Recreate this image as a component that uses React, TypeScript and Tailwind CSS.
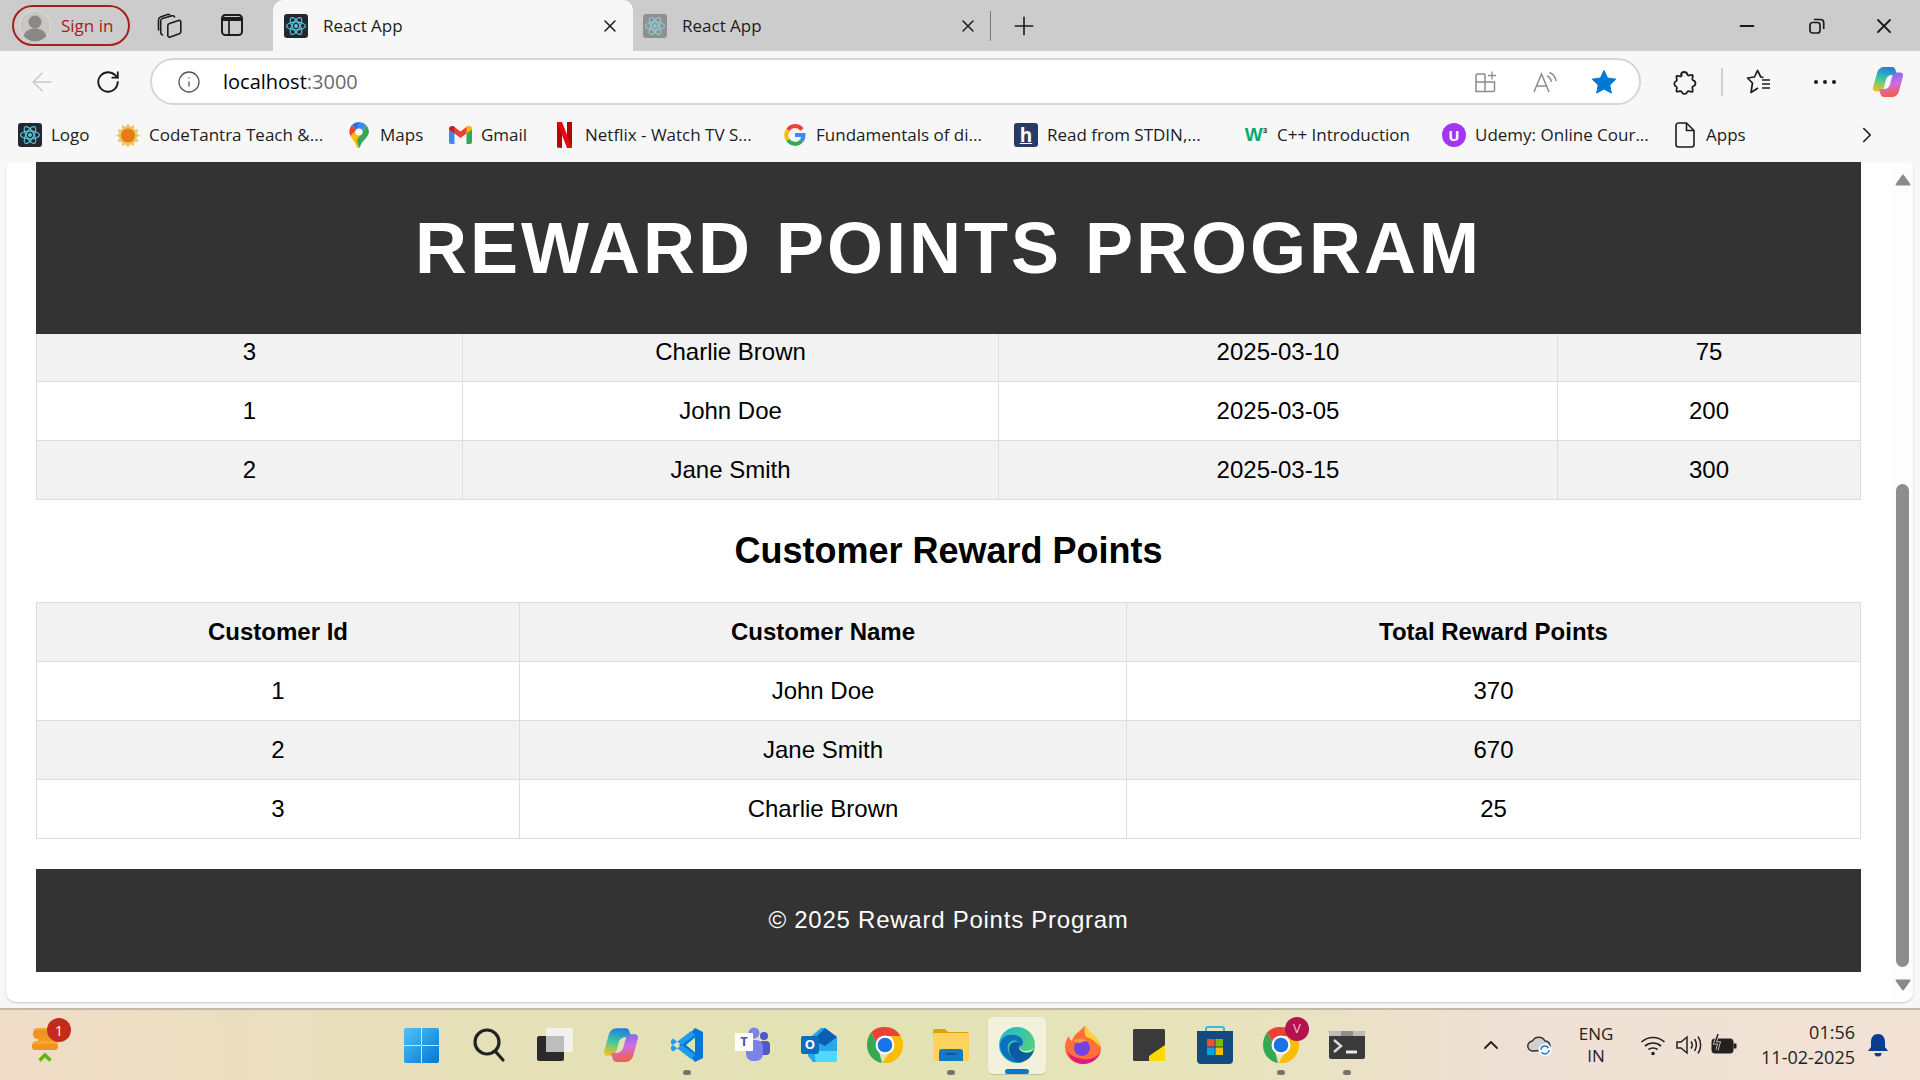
import React from 'react'
import { ArrowLeft, ChevronRight, ChevronUp, Info, Minus, Plus, RotateCw, X } from 'lucide-react'

const ReactLogo = ({ dim = false }: { dim?: boolean }) => (
  <svg width="24" height="24" viewBox="0 0 24 24" className={dim ? 'opacity-50' : ''}>
    <rect width="24" height="24" rx="3" fill={dim ? '#555' : '#23272f'} />
    <g fill="none" stroke="#58c4dc" strokeWidth="1.2">
      <ellipse cx="12" cy="12" rx="9.5" ry="3.8" />
      <ellipse cx="12" cy="12" rx="9.5" ry="3.8" transform="rotate(60 12 12)" />
      <ellipse cx="12" cy="12" rx="9.5" ry="3.8" transform="rotate(120 12 12)" />
    </g>
    <circle cx="12" cy="12" r="2" fill="#58c4dc" />
  </svg>
)

const Avatar = () => (
  <svg width="32" height="32" viewBox="0 0 32 32">
    <circle cx="16" cy="16" r="15.5" fill="#c9c7c3" stroke="#dedbd6" />
    <circle cx="16" cy="12" r="6.5" fill="#8a8885" />
    <path d="M4.5 26c2-5.500 6-7.500 11.500-7.500s9.500 2 11.500 7.500c-3 3.500-7 5.500-11.500 5.500s-8.500-2-11.500-5.500z" fill="#8a8885" />
  </svg>
)

const Collections = () => (
  <svg width="26" height="26" viewBox="0 0 26 26" fill="none" stroke="#1c1c1c" strokeWidth="1.600" strokeLinejoin="round" strokeLinecap="round">
    <path d="M13.500 10.500 22.500 7.500c1.500-.4 2.300.3 2.300 1.700v9.500c0 1.100-.5 1.700-1.500 2l-9 3.300c-1.500.5-2.500-.2-2.500-1.700V12.500c0-1 .5-1.700 1.700-2z" />
    <path d="M6.500 22c-1.200-.5-1.800-1.300-1.800-2.500V8c0-1.200.6-2 1.800-2.400L16 2.800c1.200-.3 2 0 2.600 1" />
    <path d="M2.500 17V7c0-1.500.7-2.500 2-3l7-2.500c1-.3 1.700-.1 2.200.6" />
  </svg>
)

const TabActions = () => (
  <svg width="24" height="24" viewBox="0 0 24 24" fill="none" stroke="#1c1c1c" strokeWidth="2">
    <rect x="2" y="2" width="20" height="20" rx="3.500" />
    <path d="M2 6h20" strokeWidth="4" />
    <path d="M9 7v15" strokeWidth="1.700" />
  </svg>
)

const Restore = () => (
  <svg width="18" height="18" viewBox="0 0 18 18" fill="none" stroke="#1c1c1c" strokeWidth="1.700">
    <rect x="2" y="5.500" width="10" height="10.500" rx="2.500" />
    <path d="M6 2.500h6.500c2 0 3.200 1.200 3.200 3.200V12" />
  </svg>
)

const SplitAdd = () => (
  <svg width="24" height="24" viewBox="0 0 24 24" fill="none" stroke="#8c8c8c" strokeWidth="1.500">
    <path d="M12 4H5a2 2 0 0 0-2 2v15.500h17a1.500 1.500 0 0 0 1.500-1.500v-8H3" />
    <path d="M12 4v17.500" />
    <path d="M19 1.500v8M15 5.500h8" strokeWidth="1.300" />
  </svg>
)

const ReadAloud = () => (
  <svg width="26" height="24" viewBox="0 0 26 24" fill="none" stroke="#8c8c8c" strokeWidth="1.500">
    <path d="M2 22 9.500 4 17 22M4.500 16h10" />
    <path d="M15 6c2.500 1 4 3 4.500 6M17.500 2.500c3.500 1.500 6 4.500 6.500 8.500" />
  </svg>
)

const Star = () => (
  <svg width="26" height="26" viewBox="0 0 26 26">
    <path d="M13 1.500l3.600 7.600 8.200 1.100-6 5.700 1.500 8.200-7.300-4-7.300 4 1.500-8.200-6-5.700 8.200-1.100z" fill="#0078d4" stroke="#0078d4" strokeLinejoin="round" />
  </svg>
)

const Extension = () => (
  <svg width="26" height="26" viewBox="0 0 26 26" fill="none" stroke="#1c1c1c" strokeWidth="1.800" strokeLinejoin="round">
    <path d="M10 5.500a3.300 3.300 0 0 1 6.400 0c.2.800 1 1.100 1.800.9l2.300-.5c.8-.2 1.500.5 1.300 1.300l-.5 2.300c-.2.800.1 1.500.9 1.800a3.200 3.200 0 0 1 0 6.100c-.8.300-1.100 1-.9 1.800l.5 2.300c.2.800-.5 1.500-1.300 1.300l-2.800-.6c-.6-.1-1.100.2-1.400.8a3 3 0 0 1-5.600 0c-.3-.6-.8-.9-1.400-.8l-2.600.5c-.8.200-1.500-.5-1.300-1.300l.5-2.500c.1-.6-.2-1.100-.8-1.400a3 3 0 0 1 0-5.500c.6-.3.900-.8.800-1.400l-.5-2.500c-.2-.8.500-1.500 1.300-1.300l2.500.5c.8.200 1.500-.1 1.600-.8z" />
  </svg>
)

const Favorites = () => (
  <svg width="26" height="26" viewBox="0 0 26 26" fill="none" stroke="#1c1c1c" strokeWidth="1.700" strokeLinejoin="round">
    <path d="M17.500 8.500 14.800 8 11.500 1.500 8.500 8 1.500 9l5 5-1.500 9.500 7-4.500" />
    <path d="M16 11h8M16 15h8M16 19h8" />
  </svg>
)

const Copilot = ({ id, size = 32 }: { id: string; size?: number }) => (
  <svg width={size} height={size} viewBox="0 0 32 32">
    <defs>
      <linearGradient id={`${id}a`} x1="0.5" y1="0" x2="0.3" y2="1">
        <stop offset="0" stopColor="#1f7fe0" />
        <stop offset="0.5" stopColor="#3fc7a0" />
        <stop offset="1" stopColor="#f5c518" />
      </linearGradient>
      <linearGradient id={`${id}b`} x1="0.5" y1="0" x2="0.7" y2="1">
        <stop offset="0" stopColor="#f2603a" />
        <stop offset="0.5" stopColor="#d36ae0" />
        <stop offset="1" stopColor="#6a6ff0" />
      </linearGradient>
    </defs>
    <path d="M12 1h8c2 0 3 1 3.500 3L25 9h-5c-3 0-5 1.500-6 4.500L12 21c-.8 3-2.500 4.500-5 4.500H4c-2 0-3.500-1.500-3-4L5 7c1-3.500 3.500-6 7-6z" fill={`url(#${id}a)`} />
    <path d="M12 1h8c2 0 3 1 3.500 3L25 9h-5c-3 0-5 1.500-6 4.500L12 21c-.8 3-2.500 4.500-5 4.500H4c-2 0-3.500-1.500-3-4L5 7c1-3.500 3.500-6 7-6z" fill={`url(#${id}b)`} transform="rotate(180 16 16)" />
  </svg>
)

const CodeTantra = () => (
  <svg width="24" height="24" viewBox="0 0 24 24">
    <path d="M12 0l2 4 4-2 0 4.500 4.500 0-2 4 3.500 2-3.500 2 2 4-4.500.5 0 4-4-1.500-2 3-2-3-4 1.500 0-4-4.500-.5 2-4L0 12.500l3.500-2-2-4 4.500 0L6 2l4 2z" fill="#e8c766" />
    <circle cx="12" cy="12.500" r="7" fill="#e87a12" />
  </svg>
)

const MapsPin = () => (
  <svg width="20" height="26" viewBox="0 0 20 26">
    <path d="M10 0A10 10 0 0 0 2.900 3L7 7.500 10 6z" fill="#1a73e8" />
    <path d="M17.100 3A10 10 0 0 0 10 0L7 7.500l6 3z" fill="#4285f4" />
    <path d="M2.900 3A10 10 0 0 0 1.500 14L7.500 8z" fill="#ea4335" />
    <path d="M1.500 14c2 3.500 5 6 6.500 12h1l4-15-6-3z" fill="#fbbc04" />
    <path d="M13 11 7.800 18 10 26c1 0 1-1 1.500-2.500C13 19 19 16 20 10a10 10 0 0 0-2.900-7z" fill="#34a853" />
    <circle cx="10" cy="10" r="3.500" fill="#fff" />
  </svg>
)

const Gmail = () => (
  <svg width="23" height="18" viewBox="0 0 23 18">
    <path d="M0 3v13a2 2 0 0 0 2 2h3.500V7z" fill="#4285f4" />
    <path d="M23 3v13a2 2 0 0 1-2 2h-3.500V7z" fill="#34a853" />
    <path d="M0 3.500C0 .8 3-1 5.300.8L11.500 5.500 17.700.8C20-1 23 .8 23 3.500L17.500 7.500 11.500 12 5.500 7.500z" fill="#ea4335" />
    <path d="M23 3.500C23 .8 20-1 17.700.8L17.500 1v6.500z" fill="#fbbc04" />
    <path d="M0 3.500C0 .8 3-1 5.300.8l.2.200v6.500z" fill="#c5221f" />
  </svg>
)

const NetflixMark = () => (
  <svg width="15" height="26" viewBox="0 0 15 26">
    <path d="M0 0h5v26l-5-.5z" fill="#b1060f" />
    <path d="M10 0h5v25.500L10 26z" fill="#b1060f" />
    <path d="M0 0h5l10 25.500L10 26z" fill="#e50914" />
  </svg>
)

const GoogleG = () => (
  <svg width="22" height="22" viewBox="0 0 22 22" fill="none" strokeWidth="4">
    <path d="M18 5.500A8.500 8.500 0 0 0 4 6" stroke="#ea4335" />
    <path d="M4 6a8.500 8.500 0 0 0 0 10" stroke="#fbbc04" />
    <path d="M4 16a8.500 8.500 0 0 0 13.500 1" stroke="#34a853" />
    <path d="M17.500 17a8.500 8.500 0 0 0 2-6H11" stroke="#4285f4" />
  </svg>
)

const PageDoc = () => (
  <svg width="20" height="26" viewBox="0 0 20 26" fill="none" stroke="#1c1c1c" strokeWidth="1.600" strokeLinejoin="round">
    <path d="M3.500 1h8L19 8.500V22.500a2.500 2.500 0 0 1-2.500 2.500h-13A2.500 2.500 0 0 1 1 22.500v-19A2.500 2.500 0 0 1 3.500 1z" />
    <path d="M11.500 1v7.500H19" />
  </svg>
)

const bookmarks = [
  { label: 'Logo', width: 'w-[98px]', icon: <ReactLogo /> },
  { label: 'CodeTantra Teach &...', width: 'w-[231px]', icon: <CodeTantra /> },
  { label: 'Maps', width: 'w-[101px]', icon: <MapsPin /> },
  { label: 'Gmail', width: 'w-[104px]', icon: <Gmail /> },
  { label: 'Netflix - Watch TV S...', width: 'w-[231px]', icon: <NetflixMark /> },
  { label: 'Fundamentals of di...', width: 'w-[231px]', icon: <GoogleG /> },
  {
    label: 'Read from STDIN,...',
    width: 'w-[230px]',
    icon: (
      <span className="flex h-6 w-6 items-center justify-center rounded-[3px] bg-[#2a3a66] text-[19px] font-bold text-white underline">
        h
      </span>
    ),
  },
  {
    label: 'C++ Introduction',
    width: 'w-[198px]',
    icon: (
      <span className="flex items-start font-['Liberation_Sans'] text-[19px] leading-5 font-bold text-[#04aa6d]">
        W<span className="text-[8px] leading-3 text-[#333]">3</span>
      </span>
    ),
  },
  {
    label: 'Udemy: Online Cour...',
    width: 'w-[231px]',
    icon: (
      <span className="flex h-6 w-6 items-center justify-center rounded-full bg-[#a435f0] text-[15px] font-bold text-white">
        U
      </span>
    ),
  },
  { label: 'Apps', width: 'w-[90px]', icon: <PageDoc /> },
]

const TabStrip = () => (
  <div className="flex h-[51px] items-center bg-[#cccccc] pl-3 text-[17px] text-[#1c1c1c]">
    <div className="flex h-[41px] w-[118px] items-center gap-[10px] rounded-full border-2 border-[#a8201a] pl-[5px] text-[#a8201a]">
      <Avatar />
      <span>Sign in</span>
    </div>
    <div className="flex w-[143px] pl-[26px]">
      <Collections />
      <span className="ml-[38px]">
        <TabActions />
      </span>
    </div>
    <div className="flex h-full w-[360px] items-center self-stretch rounded-t-[10px] bg-[#f7f7f7] pl-[11px] pr-[13px]">
      <ReactLogo />
      <span className="ml-[15px] flex-1">React App</span>
      <X size={20} strokeWidth={1.800} />
    </div>
    <div className="flex h-full w-[370px] items-center pl-[10px] pr-[12px]">
      <ReactLogo dim />
      <span className="ml-[15px] flex-1">React App</span>
      <X size={20} strokeWidth={1.800} />
      <span className="ml-[12px] h-[30px] w-px bg-[#777]" />
    </div>
    <Plus size={30} strokeWidth={1.300} className="ml-[6px]" />
    <div className="ml-auto flex items-center pr-[24px]">
      <Minus size={22} strokeWidth={2} />
      <span className="ml-[50px]">
        <Restore />
      </span>
      <span className="ml-[46px]">
        <X size={24} strokeWidth={1.800} />
      </span>
    </div>
  </div>
)

const Toolbar = () => (
  <div className="flex h-[65px] items-center bg-[#f7f7f7] pb-[4px]">
    <ArrowLeft size={30} strokeWidth={1.200} className="ml-[27px] text-[#c8c8c8]" />
    <RotateCw size={26} strokeWidth={1.700} className="ml-[38px] text-[#1c1c1c]" />
    <div className="ml-[29px] flex h-[47px] w-[1491px] items-center rounded-full border-2 border-[#d6d6d6] bg-white pl-[25px]">
      <Info size={24} strokeWidth={1.300} className="text-[#555]" />
      <span className="ml-[22px] text-[20px] text-black">
        localhost<span className="text-[#6b6b6b]">:3000</span>
      </span>
      <div className="ml-auto flex items-center pr-[22px]">
        <SplitAdd />
        <span className="ml-[35px]">
          <ReadAloud />
        </span>
        <span className="ml-[33px]">
          <Star />
        </span>
      </div>
    </div>
    <div className="ml-[30px]">
      <Extension />
    </div>
    <span className="ml-[24px] h-[28px] w-[2px] bg-[#d0d0d0]" />
    <div className="ml-[23px]">
      <Favorites />
    </div>
    <div className="ml-[42px] flex gap-[5px]">
      <span className="h-[4px] w-[4px] rounded-full bg-[#1c1c1c]" />
      <span className="h-[4px] w-[4px] rounded-full bg-[#1c1c1c]" />
      <span className="h-[4px] w-[4px] rounded-full bg-[#1c1c1c]" />
    </div>
    <div className="ml-[36px]">
      <Copilot id="edge" />
    </div>
  </div>
)

const BookmarksBar = () => (
  <div className="flex h-[46px] items-center bg-[#f7f7f7] pb-[8px] pl-[18px] text-[17px] text-[#1c1c1c]">
    {bookmarks.map((b) => (
      <div key={b.label} className={`flex shrink-0 items-center ${b.width}`}>
        <span className="flex w-6 justify-center">{b.icon}</span>
        <span className="ml-[9px] whitespace-nowrap">{b.label}</span>
      </div>
    ))}
    <ChevronRight size={26} strokeWidth={1.500} className="ml-[91px]" />
  </div>
)

const cellClass = 'border border-[#dddddd] h-[59px] text-center align-middle'

type TableProps = {
  cols: string[]
  head?: string[]
  rows: (string | number)[][]
  oddShaded: boolean
  className?: string
}

const DataTable = ({ cols, head, rows, oddShaded, className = '' }: TableProps) => (
  <table className={`w-[1824px] table-fixed text-[24px] text-black ${className}`}>
    <colgroup>
      {cols.map((c) => (
        <col key={c} className={c} />
      ))}
    </colgroup>
    {head && (
      <thead>
        <tr className="bg-[#f2f2f2]">
          {head.map((h) => (
            <th key={h} className={`${cellClass} font-bold`}>
              {h}
            </th>
          ))}
        </tr>
      </thead>
    )}
    <tbody>
      {rows.map((r, i) => (
        <tr key={r.join('-')} className={(i % 2 === 0) === oddShaded ? 'bg-[#f2f2f2]' : 'bg-white'}>
          {r.map((v, j) => (
            <td key={j} className={cellClass}>
              {v}
            </td>
          ))}
        </tr>
      ))}
    </tbody>
  </table>
)

const Triangle = ({ down = false }: { down?: boolean }) => (
  <svg width="16" height="12" viewBox="0 0 16 12" className={down ? 'rotate-180' : ''}>
    <path d="M8 1.500 14.500 10.500H1.500z" fill="#8a8a8a" stroke="#8a8a8a" strokeWidth="2" strokeLinejoin="round" />
  </svg>
)

const ScrollRail = () => (
  <div className="flex w-[21px] shrink-0 flex-col items-center bg-[#fdfdfd] pt-[12px] pb-[11px]">
    <Triangle />
    <div className="mt-[298px] h-[483px] w-[13px] rounded-full bg-[#8d8d8d]" />
    <div className="mt-auto">
      <Triangle down />
    </div>
  </div>
)

const Page = () => (
  <div className="flex h-[846px] bg-[#f7f7f7] pr-[7px] pb-[6px] pl-[6px]">
    <div className="flex h-full flex-1 overflow-hidden rounded-t-[6px] rounded-b-[10px] bg-white shadow-[0_1px_2px_rgba(0,0,0,0.2)]">
      <div className="flex-1 pl-[30px] font-['Liberation_Sans',sans-serif]">
        <header className="relative z-10 flex h-[172px] w-[1825px] items-center justify-center bg-[#333333] text-[72px] font-bold tracking-[3px] text-white">
          REWARD POINTS PROGRAM
        </header>
        <DataTable
          className="-mt-[12px]"
          cols={['w-[426px]', 'w-[536px]', 'w-[559px]', 'w-[303px]']}
          oddShaded
          rows={[
            [3, 'Charlie Brown', '2025-03-10', 75],
            [1, 'John Doe', '2025-03-05', 200],
            [2, 'Jane Smith', '2025-03-15', 300],
          ]}
        />
        <h2 className="flex h-[102px] w-[1825px] items-center justify-center text-[36px] font-bold text-black">
          Customer Reward Points
        </h2>
        <DataTable
          cols={['w-[483px]', 'w-[607px]', 'w-[734px]']}
          head={['Customer Id', 'Customer Name', 'Total Reward Points']}
          oddShaded={false}
          rows={[
            [1, 'John Doe', 370],
            [2, 'Jane Smith', 670],
            [3, 'Charlie Brown', 25],
          ]}
        />
        <footer className="mt-[30px] flex h-[103px] w-[1825px] items-center justify-center bg-[#333333] pb-[2px] text-[24px] tracking-[0.75px] text-white">
          © 2025 Reward Points Program
        </footer>
      </div>
      <ScrollRail />
    </div>
  </div>
)

const Coins = () => (
  <svg width="26" height="34" viewBox="0 0 26 34">
    <rect x="1" y="0" width="24" height="9" rx="4.500" fill="#f6a72c" />
    <rect x="1" y="2" width="24" height="9" rx="4.500" fill="#ee9420" />
    <rect x="6" y="9" width="20" height="7" rx="3.500" fill="#f29a1f" />
    <rect x="0" y="13" width="26" height="9" rx="4.500" fill="#f6a72c" />
    <rect x="0" y="16" width="26" height="6" rx="3" fill="#ee9420" />
    <path d="M9.500 32.500 15 27l5.500 5.500" fill="none" stroke="#5fb80f" strokeWidth="3.500" transform="translate(-2 0)" />
  </svg>
)

const WindowsLogo = () => (
  <svg width="35" height="35" viewBox="0 0 35 35">
    <defs>
      <linearGradient id="winTile" x1="0" y1="0" x2="1" y2="1">
        <stop offset="0" stopColor="#4fc3f7" />
        <stop offset="1" stopColor="#0078d4" />
      </linearGradient>
    </defs>
    <path d="M2 0h15v17H0V2a2 2 0 0 1 2-2zM18 0h15a2 2 0 0 1 2 2v15H18zM0 18h17v17H2a2 2 0 0 1-2-2zM18 18h17v15a2 2 0 0 1-2 2H18z" fill="url(#winTile)" />
  </svg>
)

const SearchGlyph = () => (
  <svg width="34" height="36" viewBox="0 0 34 36" fill="none" stroke="#222" strokeWidth="3.200" strokeLinecap="round">
    <circle cx="15" cy="15" r="12" />
    <path d="M23.500 24.500 31 33" />
  </svg>
)

const TaskView = () => (
  <svg width="36" height="36" viewBox="0 0 36 36">
    <rect x="0" y="9" width="27" height="25" rx="2" fill="#2b2b2b" />
    <rect x="9" y="1" width="27" height="24" rx="2" fill="#f3f3f3" fillOpacity="0.9" />
    <rect x="9" y="9" width="18" height="16" fill="#bdbdbd" />
  </svg>
)

const VSCode = () => (
  <svg width="34" height="36" viewBox="0 0 34 36" fill="none">
    <path d="M25 1 9 18l16 17 8-4V5z" fill="#0078d4" />
    <path d="M25 10.500 16 18l9 7.500z" fill="#dfe2b8" />
    <path d="M3 11.500 25 28 21 32 1 16.500v-3zM3 24.500 25 8l-4-4L1 19.500v3z" fill="#1f9cf0" />
  </svg>
)

const Teams = () => (
  <svg width="36" height="36" viewBox="0 0 36 36">
    <circle cx="29" cy="9" r="4" fill="#5059c9" />
    <rect x="24" y="14" width="11" height="14" rx="4" fill="#5059c9" />
    <circle cx="19" cy="6" r="5.500" fill="#7b83eb" />
    <rect x="11" y="13" width="17" height="21" rx="7" fill="#7b83eb" />
  </svg>
)

const Outlook = () => (
  <svg width="36" height="36" viewBox="0 0 36 36">
    <path d="M20 1h4l12 9v22a3 3 0 0 1-3 3H12l-5-6V12z" fill="#28a8ea" />
    <path d="M12 13 24 1l12 9-12 9z" fill="#0a5fb4" />
    <path d="M14 24h22v8a3 3 0 0 1-3 3H17a3 3 0 0 1-3-3z" fill="#50d9ff" />
  </svg>
)

const Chrome = () => (
  <svg width="36" height="36" viewBox="0 0 36 36">
    <path d="M18 0a18 18 0 0 1 15.600 9H18a9 9 0 0 0-8.500 6L4 5.500A18 18 0 0 1 18 0z" fill="#ea4335" />
    <path d="M4 5.500l5.500 9.500c-1 3 0 5.500 2 7.500L15 36C6 34.500 0 27 0 18 0 13 1.500 9 4 5.500z" fill="#34a853" />
    <path d="M33.600 9A18 18 0 0 1 15.500 36L24 22c2.500-3.500 2.500-9.500 0-13z" fill="#fbbc04" />
    <circle cx="18" cy="18" r="9.500" fill="#fff" />
    <circle cx="18" cy="18" r="7.300" fill="#1a73e8" />
  </svg>
)

const Folder = () => (
  <svg width="36" height="32" viewBox="0 0 36 32">
    <path d="M0 2a2 2 0 0 1 2-2h10l3 3h19a2 2 0 0 1 2 2v6H0z" fill="#e0a000" />
    <rect y="4" width="36" height="28" rx="1.500" fill="#fdd35c" />
    <path d="M6 32V23a3 3 0 0 1 3-3h18a3 3 0 0 1 3 3v9z" fill="#1479c4" />
    <path d="M13 25h10" stroke="#0b4f8a" strokeWidth="1.500" />
  </svg>
)

const Edge = () => (
  <svg width="36" height="36" viewBox="0 0 36 36">
    <defs>
      <linearGradient id="edgeA" x1="0" y1="0" x2="1" y2="0.800">
        <stop offset="0" stopColor="#1fb6d8" />
        <stop offset="1" stopColor="#5dd46b" />
      </linearGradient>
    </defs>
    <circle cx="18" cy="18" r="18" fill="url(#edgeA)" />
    <path d="M1 17C3 8 12 6 19 9c5 2 6 6 4 9-1 1.500-3 1-3-.5C20 14 15 12 11 15c-4 3-3 11 3 16 3 2.500 7 4 11 3.500C15 39 0 30 1 17z" fill="#0c6fc0" />
    <path d="M14 31c-5-5-5-12-1-15 3-2 7-1 8 1-2 4 1 9 7 9 3 0 5-1 7-3-2 7-8 12-15 12-2 0-4-2-6-4z" fill="#0c59a4" />
    <path d="M20 19c0 3 3 5 7 5 3 0 6-1 8-3-1 2-4 4-8 4-5 0-8-3-7-6z" fill="#f0f0d8" />
  </svg>
)

const Firefox = () => (
  <svg width="36" height="38" viewBox="0 0 36 38">
    <path d="M20 0c4 4 6 8 8 9 5 4 8 10 8 14 0 8-8 15-18 15S0 31 0 21c0-4 2-9 4-11 0 2 1 4 3 5C8 9 14 6 20 0z" fill="#ff7139" />
    <path d="M20 0c5 6 14 11 15 21-4-5-9-9-14-10-1-4-2-7-1-11z" fill="#ffd23a" />
    <path d="M2 25c2 8 9 13 16 13 8 0 15-5 17.500-12C31 32 25 34 18 33 11 32 6 30 2 25z" fill="#e31587" />
    <circle cx="17" cy="22" r="8" fill="#7542e5" />
    <path d="M8 15c4-3 11-3 14 0-3 0-5 1-7 2-3 0-5-1-7-2z" fill="#ff9640" />
  </svg>
)

const Sticky = () => (
  <svg width="32" height="32" viewBox="0 0 32 32">
    <rect width="32" height="32" rx="1.500" fill="#3a3a3a" />
    <path d="M16 32V27L32 16v16z" fill="#ffd800" />
  </svg>
)

const Store = () => (
  <svg width="36" height="38" viewBox="0 0 36 38">
    <path d="M9 8V3a2 2 0 0 1 2-2h14a2 2 0 0 1 2 2v5" fill="none" stroke="#35b8e8" strokeWidth="2" />
    <path d="M0 5h36v29a4 4 0 0 1-4 4H4a4 4 0 0 1-4-4z" fill="#134a80" />
    <rect x="10" y="13" width="7.500" height="7.500" fill="#f25022" />
    <rect x="18.500" y="13" width="7.500" height="7.500" fill="#7fba00" />
    <rect x="10" y="21.500" width="7.500" height="7.500" fill="#00a4ef" />
    <rect x="18.500" y="21.500" width="7.500" height="7.500" fill="#ffb900" />
  </svg>
)

const Terminal = () => (
  <svg width="36" height="28" viewBox="0 0 36 28">
    <rect width="36" height="28" rx="2" fill="#3a3a3a" />
    <path d="M0 2a2 2 0 0 1 2-2h10v5H0z" fill="#bdbdbd" />
    <path d="M12 0h12v5H12z" fill="#8e8e8e" />
    <path d="M24 0h10a2 2 0 0 1 2 2v3H24z" fill="#bdbdbd" />
    <path d="M5 9l7 6-7 6" fill="none" stroke="#d8d8d8" strokeWidth="2.500" />
    <path d="M17 21h11" stroke="#e8e8e8" strokeWidth="3" />
  </svg>
)

const RunDot = () => <span className="absolute bottom-[5px] h-[5px] w-[8px] rounded-full bg-[#77746a]" />

const Slot = ({ children, dot = false }: { children: React.ReactNode; dot?: boolean }) => (
  <div className="relative flex h-full w-[66px] items-center justify-center">
    {children}
    {dot && <RunDot />}
  </div>
)

const Taskbar = () => (
  <div className="flex h-[72px] items-center border-t-2 border-[#c4b9a9] bg-[linear-gradient(90deg,#efdcc7_0%,#e6e0b8_25%,#e2e2b4_45%,#e8e3bc_65%,#eee0d4_78%,#f2e2d6_100%)] font-['Open_Sans',sans-serif] text-[#222]">
    <div className="relative flex w-[388px] shrink-0 pl-[32px]">
      <Coins />
      <span className="absolute top-[-10px] left-[47px] flex h-6 w-6 items-center justify-center rounded-full bg-[#c42b1c] text-[14px] text-white">
        1
      </span>
    </div>

    <div className="flex h-full w-[992px] shrink-0 items-center">
      <div className="mr-[2px] h-full">
        <Slot>
          <WindowsLogo />
        </Slot>
      </div>
      <Slot>
        <SearchGlyph />
      </Slot>
      <Slot>
        <TaskView />
      </Slot>
      <Slot>
        <Copilot id="bar" size={36} />
      </Slot>
      <Slot dot>
        <VSCode />
      </Slot>
      <Slot>
        <div className="relative">
          <Teams />
          <span className="absolute top-[6px] left-0 flex h-[18px] w-[18px] items-center justify-center bg-white text-[13px] font-bold text-[#4b53bc]">
            T
          </span>
        </div>
      </Slot>
      <Slot>
        <div className="relative">
          <Outlook />
          <span className="absolute top-[9px] left-0 flex h-[18px] w-[18px] items-center justify-center rounded-[2px] bg-[#0f6cbd] text-[13px] font-bold text-white">
            O
          </span>
        </div>
      </Slot>
      <Slot>
        <Chrome />
      </Slot>
      <Slot dot>
        <Folder />
      </Slot>
      <div className="relative mx-1 flex h-[57px] w-[58px] items-center justify-center rounded-[5px] bg-[#f2f1dc] shadow-[0_1px_1px_rgba(0,0,0,0.15)]">
        <Edge />
        <span className="absolute bottom-0 h-[5px] w-[24px] rounded-full bg-[#0078d4]" />
      </div>
      <Slot>
        <Firefox />
      </Slot>
      <Slot>
        <Sticky />
      </Slot>
      <Slot>
        <Store />
      </Slot>
      <Slot dot>
        <div className="relative">
          <Chrome />
          <span className="absolute -top-[10px] -right-[10px] flex h-6 w-6 items-center justify-center rounded-full bg-[#b5134f] text-[13px] text-[#f4c6d6]">
            V
          </span>
        </div>
      </Slot>
      <Slot dot>
        <Terminal />
      </Slot>
    </div>

    <div className="flex flex-1 items-center pl-[99px]">
      <ChevronUp size={24} strokeWidth={1.800} />
      <svg width="26" height="24" viewBox="0 0 26 24" className="ml-[23px]">
        <path d="M7 18a5 5 0 0 1-.5-10A7 7 0 0 1 19 8a5 5 0 0 1 3 9z" fill="#d0d0d0" stroke="#333" strokeWidth="1.500" />
        <circle cx="19" cy="17" r="6.500" fill="#fff" />
        <circle cx="19" cy="17" r="4" fill="none" stroke="#0f78d4" strokeWidth="1.500" strokeDasharray="10 2.500" />
      </svg>
      <div className="ml-[12px] w-[64px] text-center text-[17px] leading-[22px]">
        <div>ENG</div>
        <div>IN</div>
      </div>
      <svg width="26" height="22" viewBox="0 0 26 22" fill="none" stroke="#222" strokeWidth="1.700" className="ml-[12px]">
        <path d="M1.500 8c6.500-6 16.500-6 23 0M5 12c4.500-4 11.500-4 16 0M8.500 15.500c2.500-2 6.500-2 9 0" />
        <circle cx="13" cy="19.500" r="1.800" fill="#222" stroke="none" />
      </svg>
      <svg width="26" height="22" viewBox="0 0 26 22" fill="none" stroke="#222" strokeWidth="1.500" className="ml-[10px]">
        <path d="M1 8h4l6-5v16l-6-5H1z" />
        <path d="M15 7.500c1.500 2 1.500 5 0 7M18.500 5c2.500 3.500 2.500 8.500 0 12M22 2.500c3.500 5 3.500 12 0 17" />
      </svg>
      <svg width="26" height="22" viewBox="0 0 26 22" className="ml-[9px]">
        <rect x="1" y="5" width="21" height="14" rx="2.500" fill="#222" stroke="#222" />
        <rect x="22.500" y="9.500" width="3" height="5" fill="#222" />
        <path d="M7 0 4 9h4l-2 7" fill="none" stroke="#f0e0d4" strokeWidth="3" />
        <path d="M7 0 4 9h4l-2 7" fill="none" stroke="#222" strokeWidth="1.500" />
      </svg>
      <div className="ml-[21px] w-[97px] shrink-0 text-right text-[18px] leading-[25px] whitespace-nowrap">
        <div>01:56</div>
        <div>11-02-2025</div>
      </div>
      <svg width="22" height="24" viewBox="0 0 22 24" className="ml-[12px]">
        <path d="M11 1c4.500 0 7 3.500 7 8v5l3 4H1l3-4V9c0-4.500 2.500-8 7-8z" fill="#0a3d91" />
        <path d="M7.500 20a3.500 3.500 0 0 0 7 0z" fill="#0a3d91" />
      </svg>
    </div>
  </div>
)

export default function App() {
  return (
    <div className="flex h-screen w-screen flex-col overflow-hidden font-['Open_Sans',sans-serif]">
      <TabStrip />
      <Toolbar />
      <BookmarksBar />
      <Page />
      <Taskbar />
    </div>
  )
}
